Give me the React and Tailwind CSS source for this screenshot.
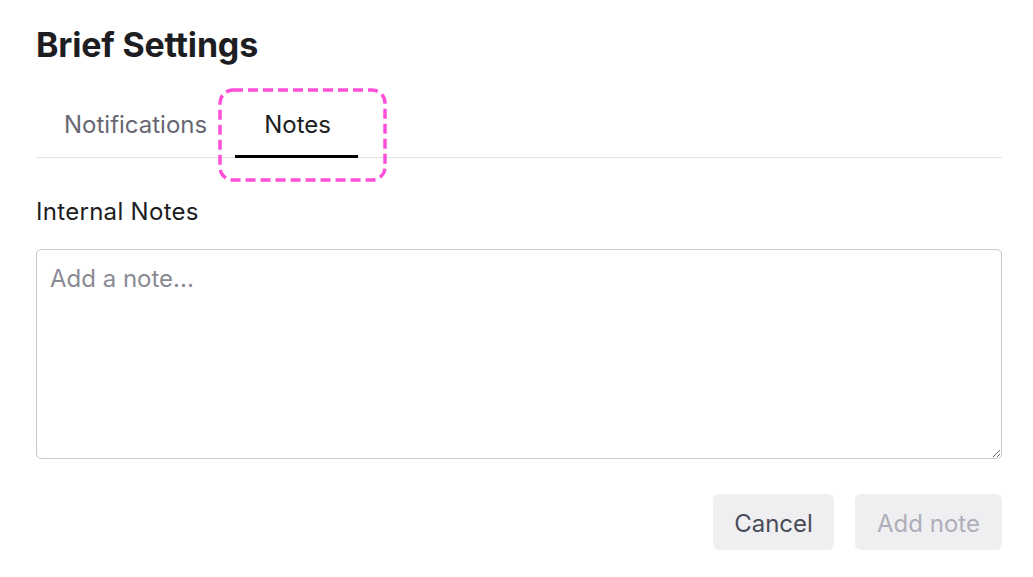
export default function App() {
    return (
        <div className="min-h-screen bg-white pl-[36px] pr-[31px] pt-[25px] font-['Inter',sans-serif] text-[#1d1d22]">
            {/* Header */}
            <h1 className="text-[34px] leading-[40px] font-bold tracking-[-0.2px]">Brief Settings</h1>

            {/* Tabs */}
            <div className="relative mt-[45px] flex border-b border-[#e1e1e6]">
                <button className="px-[28px] pb-[17px] text-[24px] leading-[30px] text-[#676773]">Notifications</button>
                <button className="relative pl-[29px] pr-[27px] pb-[17px] text-[24px] leading-[30px] text-[#1d1d22]">
                    Notes
                    <span className="absolute bottom-[-1px] left-0 right-0 h-[3px] bg-black" />
                </button>
                {/* highlight annotation */}
                <svg className="pointer-events-none absolute left-[182px] top-[-22px]" width="169" height="94" viewBox="0 0 169 94">
                    <rect x="2" y="2" width="165" height="90" rx="13" fill="none" stroke="#ff4fd8" strokeWidth="3.5" strokeDasharray="10 5" />
                </svg>
            </div>

            {/* Notes */}
            <label className="mt-[39px] block text-[24px] leading-[30px] tracking-[0.3px] text-[#1d1d22]">Internal Notes</label>
            <textarea
                placeholder="Add a note..."
                className="mt-[22px] block h-[210px] w-full rounded-[5px] border border-[#c9c9cf] px-[13px] pt-[14px] text-[24px] leading-[30px] placeholder:text-[#8a8a95] outline-none"
            />

            <div className="mt-[35px] flex justify-end gap-[21px]">
                <button className="h-[56px] w-[121px] rounded-[6px] bg-[#efeff2] pt-[3px] text-[24px] text-[#4a4d58]">Cancel</button>
                <button disabled className="h-[56px] w-[147px] rounded-[6px] bg-[#efeff2] pt-[3px] text-[24px] text-[#aeaeba]">Add note</button>
            </div>
        </div>
    )
}
